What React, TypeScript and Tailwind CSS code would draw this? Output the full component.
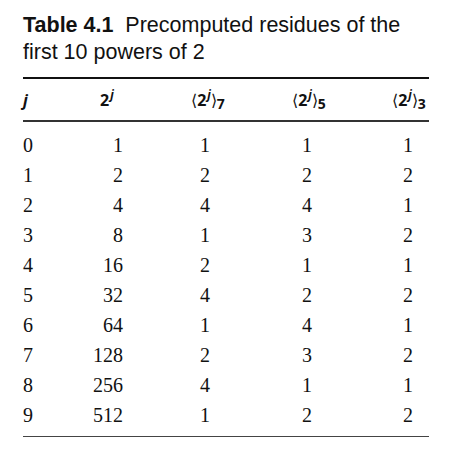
import React from "react";

const rows: [number, number, number, number, number][] = [
  [0, 1, 1, 1, 1],
  [1, 2, 2, 2, 2],
  [2, 4, 4, 4, 1],
  [3, 8, 1, 3, 2],
  [4, 16, 2, 1, 1],
  [5, 32, 4, 2, 2],
  [6, 64, 1, 4, 1],
  [7, 128, 2, 3, 2],
  [8, 256, 4, 1, 1],
  [9, 512, 1, 2, 2],
];

const sans = "font-['Liberation_Sans',Arial,sans-serif]";
const hdr = "font-['Open_Sans','Liberation_Sans',sans-serif] font-bold";
const serif = "font-['Liberation_Serif','Times_New_Roman',serif]";

function Pow() {
  return (
    <span>
      2<sup className="italic text-[12px] -top-[7px] ml-[1px]">j</sup>
    </span>
  );
}

function Mod({ m }: { m: number }) {
  return (
    <span>
      <span className="font-normal">⟨</span>
      <Pow />
      <span className="font-normal">⟩</span>
      <sub className="text-[14px] top-[3px]">{m}</sub>
    </span>
  );
}

export default function App() {
  return (
    <div className="w-[455px] h-[456px] bg-white text-[#111]">
      <div className="pl-[23px] pt-[12px] w-[429px]">
        <div className={`${sans} text-[21.5px] leading-[27px] text-[#111]`}>
          <span className="font-bold">Table 4.1</span>
          <span>&nbsp; Precomputed residues of the</span>
          <br />
          <span>first 10 powers of 2</span>
        </div>
        <div className="mt-[11px] h-[2px] bg-[#111]" />
        <div
          className={`grid grid-cols-[57px_43px_164px_40px_102px] h-[41px] items-center ${hdr} text-[16px] text-[#111]`}
        >
          <div className="italic">j</div>
          <div className="pl-[20px]">
            <Pow />
          </div>
          <div className="text-center whitespace-nowrap pl-[6px]">
            <Mod m={7} />
          </div>
          <div className="text-center whitespace-nowrap pl-[4px]">
            <Mod m={5} />
          </div>
          <div className="pl-[62px] text-center whitespace-nowrap">
            <Mod m={3} />
          </div>
        </div>
        <div className="h-[1.5px] bg-[#333]" />
        <div className={`pt-[8px] ${serif} text-[20px] text-[#111]`}>
          {rows.map((r) => (
            <div
              key={r[0]}
              className="grid grid-cols-[57px_43px_164px_40px_102px] h-[30px] items-center"
            >
              <div>{r[0]}</div>
              <div className="text-right">{r[1]}</div>
              <div className="text-center">{r[2]}</div>
              <div className="text-center">{r[3]}</div>
              <div className="pl-[60px] text-center">{r[4]}</div>
            </div>
          ))}
        </div>
        <div className="mt-[6px] h-[1.5px] bg-[#444]" />
      </div>
    </div>
  );
}
